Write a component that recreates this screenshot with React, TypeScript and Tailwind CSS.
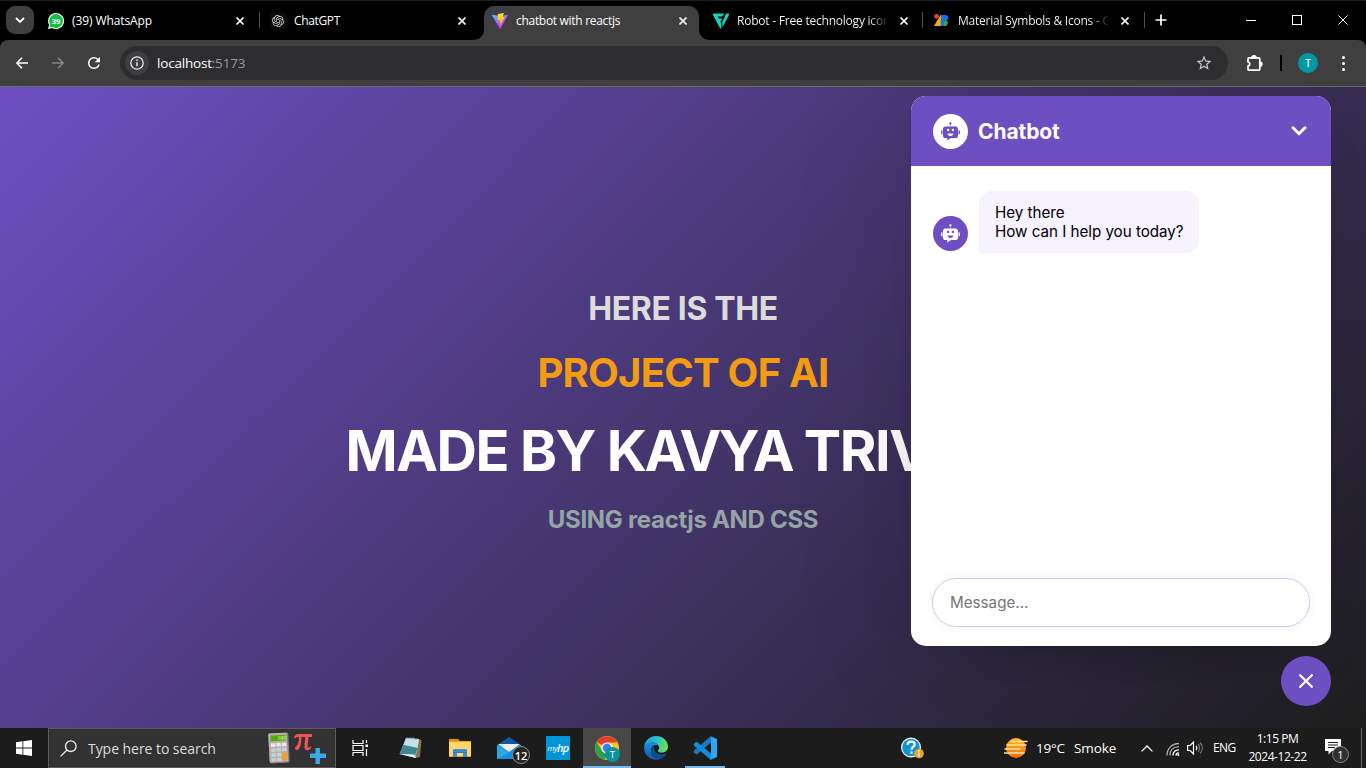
import React from "react";

const UI = "font-['Open_Sans','Noto_Sans',sans-serif]";

const ROBOT =
  "M738.3 287.6H285.7c-59 0-106.8 47.8-106.8 106.8v303.1c0 59 47.8 106.8 106.8 106.8h81.5v111.1c0 .7.8 1.1 1.4.7l166.9-110.6 41.8-.8h117.4l43.6-.4c59 0 106.8-47.8 106.8-106.8V394.5c0-59-47.8-106.9-106.8-106.9zM351.7 448.2c0-29.5 23.9-53.5 53.5-53.5s53.5 23.9 53.5 53.5-23.9 53.5-53.5 53.5-53.5-23.9-53.5-53.5zm157.9 267.1c-67.8 0-123.8-47.5-132.3-109h264.6c-8.6 61.5-64.5 109-132.3 109zm110-213.7c-29.5 0-53.5-23.9-53.5-53.5s23.9-53.5 53.5-53.5 53.5 23.9 53.5 53.5-23.9 53.5-53.5 53.5zM867.2 644.5V453.1h26.5c19.4 0 35.1 15.7 35.1 35.1v121.1c0 19.4-15.7 35.1-35.1 35.1h-26.5zM95.2 609.4V488.2c0-19.4 15.7-35.1 35.1-35.1h26.5v191.3h-26.5c-19.4 0-35.1-15.7-35.1-35.1zM561.5 149.6c0 23.4-15.6 43.3-36.9 49.7v44.9h-30v-44.9c-21.4-6.5-36.9-26.3-36.9-49.7 0-28.6 23.3-51.9 51.9-51.9s51.9 23.3 51.9 51.9z";

function Robot({ inverted }: { inverted?: boolean }) {
  return (
    <div
      className={
        inverted
          ? "flex size-[35px] shrink-0 items-center justify-center rounded-full bg-white text-[#6D4FC2]"
          : "flex size-[35px] shrink-0 items-center justify-center rounded-full bg-[#6D4FC2] text-white"
      }
    >
      <svg viewBox="0 0 1024 1024" className="size-[23px]" fill="currentColor">
        <path d={ROBOT} />
      </svg>
    </div>
  );
}

function WhatsAppIcon() {
  return (
    <svg viewBox="0 0 16 16" className="size-4 shrink-0">
      <path d="M8 0a8 8 0 1 1-3.8 15L0 16l1.1-4A8 8 0 0 1 8 0z" fill="#fff" />
      <path d="M8 1a7 7 0 1 1-3.6 13L1.4 14.6l.8-3A7 7 0 0 1 8 1z" fill="#12c143" />
      <text x="8" y="10.7" textAnchor="middle" fontSize="7.6" fontWeight="700" fontFamily="Open Sans" fill="#fff">39</text>
    </svg>
  );
}

function OpenAIIcon() {
  return (
    <svg viewBox="0 0 16 16" className="size-4 shrink-0">
      <rect width="16" height="16" rx="3" fill="#0b0b0b" />
      <g transform="translate(2 2) scale(.5)" fill="#d5d5d5">
        <path d="M22.28 9.82a5.98 5.98 0 0 0-.52-4.91 6.05 6.05 0 0 0-6.51-2.9A6.07 6.07 0 0 0 4.98 4.18a5.98 5.98 0 0 0-4 2.9 6.05 6.05 0 0 0 .74 7.1 5.98 5.98 0 0 0 .51 4.91 6.05 6.05 0 0 0 6.52 2.9A5.98 5.98 0 0 0 13.26 24a6.06 6.06 0 0 0 5.77-4.21 5.99 5.99 0 0 0 4-2.9 6.06 6.06 0 0 0-.75-7.07zm-9.02 12.61a4.48 4.48 0 0 1-2.88-1.04l.14-.08 4.78-2.76a.8.8 0 0 0 .39-.68v-6.74l2.02 1.17v5.62a4.5 4.5 0 0 1-4.45 4.51zM3.6 18.3a4.47 4.47 0 0 1-.53-3.01l.14.08 4.78 2.76a.77.77 0 0 0 .78 0l5.84-3.37v2.33l-4.87 2.84A4.5 4.5 0 0 1 3.6 18.3zM2.34 7.9A4.49 4.49 0 0 1 4.7 5.92v5.68a.77.77 0 0 0 .39.68l5.81 3.35-2.02 1.17-4.86-2.76A4.5 4.5 0 0 1 2.34 7.9zm16.6 3.86-5.84-3.4 2.02-1.16 4.86 2.81a4.5 4.5 0 0 1-.68 8.1v-5.68a.79.79 0 0 0-.36-.67zm2.01-3.03-4.92-2.81a.78.78 0 0 0-.78 0L9.41 9.23V6.9l4.9-2.83a4.5 4.5 0 0 1 6.64 4.66zM8.3 12.86l-2.02-1.16V6.07a4.5 4.5 0 0 1 7.38-3.45L8.74 5.38a.8.8 0 0 0-.4.68zm1.1-2.37L12 9l2.6 1.5v3L12 15l-2.6-1.5z" />
      </g>
    </svg>
  );
}

function ViteIcon() {
  return (
    <svg viewBox="0 0 256 257" className="size-4 shrink-0">
      <defs>
        <linearGradient id="va" x1="0" x2=".57" y1="0" y2=".78">
          <stop offset="0" stopColor="#41D1FF" />
          <stop offset="1" stopColor="#BD34FE" />
        </linearGradient>
        <linearGradient id="vb" x1=".43" x2=".5" y1="0" y2=".9">
          <stop offset="0" stopColor="#FFEA83" />
          <stop offset=".1" stopColor="#FFDD35" />
          <stop offset="1" stopColor="#FFA800" />
        </linearGradient>
      </defs>
      <path fill="url(#va)" d="M255.153 37.938 134.897 252.976c-2.483 4.44-8.862 4.466-11.382.048L.875 37.958c-2.746-4.814 1.371-10.646 6.827-9.67l120.385 21.517a6.537 6.537 0 0 0 2.322-.004l117.867-21.483c5.438-.991 9.574 4.796 6.877 9.62Z" />
      <path fill="url(#vb)" d="M185.432.063 96.44 17.501a3.268 3.268 0 0 0-2.634 3.014l-5.474 92.456a3.268 3.268 0 0 0 3.997 3.378l24.777-5.718c2.318-.535 4.413 1.507 3.936 3.838l-7.361 36.047c-.495 2.426 1.782 4.5 4.151 3.78l15.304-4.649c2.372-.72 4.652 1.36 4.15 3.788l-11.698 56.621c-.732 3.542 3.979 5.473 5.943 2.437l1.313-2.028 72.516-144.72c1.215-2.423-.88-5.186-3.54-4.672l-25.505 4.922c-2.396.462-4.435-1.77-3.759-4.114l16.646-57.705c.677-2.35-1.37-4.583-3.769-4.113Z" />
    </svg>
  );
}

function FlaticonIcon() {
  return (
    <svg viewBox="0 0 16 16" className="size-4 shrink-0" fill="#10d5c2">
      <path d="M.2.5H11L9.3 3.600H4.800l1 1.900h3.400L7.600 8.500h-.3l1.100 2.200-.1 4.900c-.6.300-1.100 0-1.400-.500L.300 2.400C-.100 1.500-.200 1 .200.500z" />
      <path d="M13.200.500h2.500c.500.600.300 1.200 0 1.900L9.300 14.500V9.200z" />
    </svg>
  );
}

function GoogleFontsIcon() {
  return (
    <svg viewBox="0 0 16 16" className="size-4 shrink-0">
      <path d="M0 13 6.500 2H8v11z" fill="#f9ab00" />
      <path d="M7 2h3v11H6.500z" fill="#1a73e8" />
      <circle cx="2.500" cy="3.300" r="2.400" fill="#ea4335" />
      <path d="M10 2h1.500a2.800 2.800 0 0 1 0 5.600H10z" fill="#1a73e8" />
      <path d="M10 7h1.700a3.200 3.200 0 0 1 0 6H10z" fill="#34a853" />
      <path d="M10 7h1.400a3.100 3.100 0 0 0-1.400 3z" fill="#0d652d" />
    </svg>
  );
}

function TabClose() {
  return (
    <svg viewBox="0 0 8 8" className="size-2 shrink-0" stroke="#f1f1f1" strokeWidth="1.7">
      <path d="M.5.5l7 7M7.500.500l-7 7" />
    </svg>
  );
}

function Tab({
  icon,
  title,
  titleClass,
  wide,
}: {
  icon: React.ReactNode;
  title: string;
  titleClass: string;
  wide?: boolean;
}) {
  return (
    <div className={wide ? "flex h-[39px] w-[196px] shrink-0 items-center" : "flex h-[39px] w-[195px] shrink-0 items-center"}>
      {icon}
      <div className="ml-2 flex-1 overflow-hidden whitespace-nowrap text-xs text-white">
        <span className={titleClass}>{title}</span>
      </div>
      <div className="ml-[13px]">
        <TabClose />
      </div>
    </div>
  );
}

function Separator() {
  return <div className="mt-[11px] h-4 w-px shrink-0 self-start bg-[#505050]" />;
}

function TabStrip() {
  return (
    <div className={`flex h-10 shrink-0 border-t border-[#202020] bg-black ${UI}`}>
      <div className="ml-[6px] mt-[5px] flex size-7 shrink-0 items-center justify-center rounded-[9px] bg-[#3f3f3f]">
        <svg viewBox="0 0 10 7" className="h-[7px] w-[10px]" fill="none" stroke="#fff" strokeWidth="1.8">
          <path d="M1 1l4 4 4-4" />
        </svg>
      </div>
      <div className="ml-[14px] flex w-[211px] shrink-0">
        <Tab wide icon={<WhatsAppIcon />} title="(39) WhatsApp" titleClass="tracking-[-0.1px]" />
      </div>
      <Separator />
      <div className="ml-[10px] flex w-[214px] shrink-0">
        <Tab wide icon={<OpenAIIcon />} title="ChatGPT" titleClass="tracking-[-0.35px]" />
      </div>
      <div className="relative mt-[5px] flex h-[34px] w-[215px] shrink-0 rounded-t-[10px] bg-[#3f3f3f] pl-2">
        <svg viewBox="0 0 10 10" className="absolute -left-[10px] bottom-0 size-[10px]" fill="#3f3f3f">
          <path d="M10 0v10H0A10 10 0 0 0 10 0z" />
        </svg>
        <svg viewBox="0 0 10 10" className="absolute -right-[10px] bottom-0 size-[10px]" fill="#3f3f3f">
          <path d="M0 0v10h10A10 10 0 0 1 0 0z" />
        </svg>
        <div className="-mt-[5px]">
          <Tab icon={<ViteIcon />} title="chatbot with reactjs" titleClass="tracking-[-0.3px]" />
        </div>
      </div>
      <div className="ml-[14px] flex w-[209px] shrink-0">
        <Tab
          icon={<FlaticonIcon />}
          title="Robot - Free technology icons"
          titleClass="block bg-linear-to-r from-white from-88% to-white/10 to-100% bg-clip-text tracking-[-0.22px] text-transparent"
        />
      </div>
      <Separator />
      <div className="ml-[11px] flex w-[210px] shrink-0">
        <Tab
          icon={<GoogleFontsIcon />}
          title="Material Symbols & Icons - Google"
          titleClass="block bg-linear-to-r from-white from-88% to-white/10 to-100% bg-clip-text tracking-[-0.23px] text-transparent"
        />
      </div>
      <Separator />
      <svg viewBox="0 0 12 12" className="ml-[10px] mt-[13px] size-3 shrink-0" stroke="#fff" strokeWidth="1.7">
        <path d="M6 .5v11M.5 6h11" />
      </svg>
      <div className="ml-auto mr-[18px] mt-[13px] flex h-[12px] items-center gap-9">
        <div className="h-px w-[10px] bg-white" />
        <div className="size-[10px] border border-white" />
        <svg viewBox="0 0 11 11" className="size-[10px]" stroke="#fff" strokeWidth="1.1">
          <path d="M.5.500l10 10M10.500.500l-10 10" />
        </svg>
      </div>
    </div>
  );
}

function Toolbar() {
  return (
    <div className="shrink-0 bg-black">
      <div className={`flex h-[47px] items-center rounded-t-[8px] border-b border-[#6b6b6b] bg-[#3f3f3f] ${UI}`}>
        <svg viewBox="0 0 12 12" className="ml-4 size-3" fill="none" stroke="#fff" strokeWidth="1.6">
          <path d="M12 6H1M6 .800.800 6 6 11.200" />
        </svg>
        <svg viewBox="0 0 12 12" className="ml-6 size-3" fill="none" stroke="#868686" strokeWidth="1.600">
          <path d="M0 6h11M6 .800 11.200 6 6 11.200" />
        </svg>
        <svg viewBox="0 0 24 24" className="ml-[21px] size-[18px]" fill="#fff">
          <path d="M17.650 6.350A7.960 7.960 0 0 0 12 4a8 8 0 1 0 7.730 10h-2.080A6 6 0 1 1 12 6c1.660 0 3.140.690 4.220 1.780L13 11h7V4z" />
        </svg>
        <div className="ml-[17px] flex h-[34px] w-[1108px] items-center rounded-full bg-[#2d2d30]">
          <div className="ml-[5px] flex size-6 items-center justify-center rounded-full bg-[#3e3e40]">
            <svg viewBox="0 0 14 14" className="size-[14px]" fill="none" stroke="#e8e8e8" strokeWidth="1.3">
              <circle cx="7" cy="7" r="6.200" />
              <path d="M7 6.200v4M7 3.600v1.400" strokeWidth="1.500" />
            </svg>
          </div>
          <div className="ml-2 text-[13.500px] leading-5 tracking-[-0.2px] text-white">
            localhost<span className="text-[#9a9a9d]">:5173</span>
          </div>
          <svg viewBox="0 0 24 24" className="ml-auto mr-[15px] size-[18px]" fill="#c7c7c7">
            <path d="m22 9.240-7.190-.620L12 2 9.190 8.630 2 9.240l5.460 4.730L5.820 21 12 17.270 18.180 21l-1.630-7.030zM12 15.400l-3.760 2.270 1-4.280-3.320-2.880 4.380-.380L12 6.100l1.710 4.040 4.380.380-3.320 2.880 1 4.280z" />
          </svg>
        </div>
        <svg viewBox="0 0 17 17" className="ml-[18px] size-[17px]" fill="none" stroke="#fff" strokeWidth="1.700">
          <path d="M3 2.900h9.800q1 0 1 1v10.300q0 1-1 1H3q-1 0-1-1v-3.100c2.400-.600 2.400-3.600 0-4.200V3.900q0-1 1-1z" strokeLinejoin="round" />
          <path d="M6 2.900a2 2 0 0 1 4 0zM13.800 7a2 2 0 0 1 0 4z" fill="#fff" />
        </svg>
        <div className="ml-[17px] h-4 w-[2px] bg-black" />
        <div className="ml-4 flex size-5 items-center justify-center rounded-full bg-[#0097a7] text-[10px] leading-none font-semibold text-white">T</div>
        <div className="ml-6 flex w-[3px] flex-col gap-[3px]">
          <div className="size-[3px] rounded-full bg-white" />
          <div className="size-[3px] rounded-full bg-white" />
          <div className="size-[3px] rounded-full bg-white" />
        </div>
      </div>
    </div>
  );
}

function Chat() {
  return (
    <div className="absolute right-[35px] top-[9px] flex h-[550px] w-[420px] flex-col overflow-hidden rounded-[15px] bg-white shadow-[0_32px_64px_-48px_rgba(0,0,0,0.5),0_0_128px_0_rgba(0,0,0,0.1)]">
      <div className="flex h-[70px] shrink-0 items-center bg-[#6D4FC2] px-[22px]">
        <Robot inverted />
        <h2 className="ml-[10px] pt-px text-[21px] font-bold tracking-[-0.1px] text-white">Chatbot</h2>
        <svg viewBox="0 0 16 10" className="ml-auto mr-[2px] h-[10px] w-4" fill="none" stroke="#fff" strokeWidth="2.900" strokeLinecap="round">
          <path d="M2 1.800l6 6 6-6" />
        </svg>
      </div>
      <div className="flex flex-1 items-start px-[22px] pt-[25px]">
        <div className="flex items-end">
          <div className="mb-[2px]">
            <Robot />
          </div>
          <div className="ml-[11px] h-[62px] w-[220px] rounded-[13px_13px_13px_3px] bg-[#F6F2FF] px-4 py-3 text-[15.200px] leading-[19px] tracking-[-0.03px] text-black">
            Hey there
            <br />
            How can I help you today?
          </div>
        </div>
      </div>
      <div className="px-[21px] pb-[19px]">
        <div className="flex h-[49px] items-center rounded-full border border-[#CCCCE5] px-[17px] pt-[2px] text-[15.200px] text-[#757575] shadow-[0_0_8px_rgba(0,0,0,0.06)]">
          Message...
        </div>
      </div>
    </div>
  );
}

function Page() {
  return (
    <div className="relative flex h-[641px] shrink-0 flex-col items-center overflow-hidden bg-[linear-gradient(135deg,#6D4FC2,#1e1e1e)] font-['Inter',sans-serif] font-bold whitespace-nowrap">
      <div className="mt-[202px] text-[32px] leading-10 tracking-[-0.35px] text-[#dcdcdc]">HERE IS THE</div>
      <div className="mt-[19px] text-[40px] leading-[50px] tracking-[-0.78px] text-[#f39c12]">PROJECT OF AI</div>
      <div className="mt-[18px] pr-[5px] text-[56px] leading-[70px] tracking-[-1.470px] text-white">
        MADE BY <span className="tracking-[-2.500px]">KAVYA</span> TRIVEDI
      </div>
      <div className="mt-[19px] text-[24px] leading-[30px] tracking-[-0.3px] text-[#95a5a6]">USING reactjs AND CSS</div>
      <div className="font-normal">
        <Chat />
      </div>
      <div className="absolute right-[35px] top-[569px] flex size-[50px] items-center justify-center rounded-full bg-[#6D4FC2]">
        <svg viewBox="0 0 14 14" className="size-[14px]" stroke="#fff" strokeWidth="2.300" strokeLinecap="round">
          <path d="M1.200 1.200l11.600 11.600M12.800 1.200 1.200 12.800" />
        </svg>
      </div>
    </div>
  );
}

function NotepadIcon() {
  return (
    <svg viewBox="0 0 24 24" className="size-6">
      <path d="M19 3l3.500 1-1.500 17-4 1z" fill="#8a7442" />
      <path d="M7 2l13 1-3 19L.500 18z" fill="#77b5c4" />
      <path d="M7 2l13 1-1.500 9L4.500 9z" fill="#c5e0e6" />
      <path d="M4.500 9l14 3-2.500 7L.500 18z" fill="#3f8793" />
      <path d="M.500 18l14.500.500 2 3.500z" fill="#e7f5f8" />
      <path d="M8 1v2M11 1v2M14 1v2M17 2v2" stroke="#8a8a8a" strokeWidth="1" />
    </svg>
  );
}

function FolderIcon() {
  return (
    <svg viewBox="0 0 22 20" className="h-5 w-[22px]">
      <path d="M0 1h9l2 2h11v16H0z" fill="#e8a317" />
      <path d="M0 4h22v14H0z" fill="#ffd668" />
      <path d="M0 1h9l1 2H0z" fill="#d99400" />
      <path d="M4 12q0-1 1-1h12q1 0 1 1v7h-4v-4H8v4H4z" fill="#3a8dd8" />
      <path d="M4 14h14v1H4z" fill="#2f78bd" />
    </svg>
  );
}

function MailIcon() {
  return (
    <div className="relative size-6">
      <svg viewBox="0 0 24 24" className="size-6">
        <path d="M0 9 12 1l12 8z" fill="#0c59a4" />
        <path d="M0 9h24v14H0z" fill="#1490df" />
        <path d="M1 8h22L12 16z" fill="#f0f0f0" />
        <path d="M0 9l12 8L0 23z" fill="#28a8ea" />
      </svg>
      <div className="absolute left-[15px] top-[10px] flex size-[18px] items-center justify-center rounded-full border border-[#8a8a8a] bg-[#242424] text-[11px] leading-none font-semibold text-white">
        12
      </div>
    </div>
  );
}

function ChromeIcon() {
  return (
    <div className="relative size-6">
      <svg viewBox="0 0 24 24" className="size-6">
        <circle cx="12" cy="12" r="12" fill="#f7c325" />
        <path d="M12 12 1.600 6A12 12 0 0 1 22.400 6.500H12z" fill="#e33b2e" />
        <path d="M1.600 6 7.200 15 12 17.500 10 23.800A12 12 0 0 1 1.600 6z" fill="#2ba24c" />
        <circle cx="12" cy="12" r="5.600" fill="#fff" />
        <circle cx="12" cy="12" r="4.400" fill="#3f7de8" />
      </svg>
      <div className="absolute left-[10px] top-[11px] flex size-[15px] items-center justify-center rounded-full bg-[#0b929a] text-[9px] leading-none text-white">T</div>
    </div>
  );
}

function EdgeIcon() {
  return (
    <svg viewBox="0 0 24 24" className="size-6">
      <defs>
        <linearGradient id="ea" x1="0" x2="1" y1=".3" y2=".5">
          <stop offset="0" stopColor="#1f9be6" />
          <stop offset=".5" stopColor="#2ec0c9" />
          <stop offset="1" stopColor="#6ee04f" />
        </linearGradient>
        <linearGradient id="eb" x1="0" x2="0" y1="0" y2="1">
          <stop offset="0" stopColor="#1b8fe0" />
          <stop offset="1" stopColor="#1259a5" />
        </linearGradient>
      </defs>
      <path d="M.100 11C.800 4.500 6 0 12 0c7 0 12 5 12 10.500 0 4-3 6-6.200 6-2.800 0-4-1-4-1.800 0-.500 1.300-1.200 1.300-3.200C15.100 8.500 12 6.400 8.500 6.400 4 6.400 1 9 .100 11z" fill="url(#ea)" />
      <path d="M.100 11C1 8.500 4.500 6.400 8.500 6.400c3.500 0 6.600 2 6.600 5 0-1.200-1.300-2.400-3-2.400-3.500 0-5.100 3-5.100 5.500 0 5 4 8.500 8.500 8.800A12 12 0 0 1 .100 11z" fill="url(#eb)" />
      <path d="M10 10c-2 1-3 3-3 5 0 4.500 3.500 8.500 8.500 8.300 3-.800 5.500-2.800 6.900-5.300.200-.500-.200-.800-.700-.500-5.500 2.500-12.500-.500-11.700-7.500z" fill="#114a8b" />
    </svg>
  );
}

function VSCodeIcon() {
  return (
    <svg viewBox="0 0 24 24" className="size-6">
      <path d="M18 0v6.500L4 18.200 2.800 18 .800 16.200v-1.500z" fill="#0f7dc9" />
      <path d="M.800 8.100 2.800 6l1.200-.100L18 17.500V24L.800 9.500z" fill="#138bd8" />
      <path d="M17 0 24 3v18l-7 3c-.500 0 1-.200 1-1.500v-21C18 .200 17 0 17 0z" fill="#2ba6f2" />
    </svg>
  );
}

function TaskButton({ children, state }: { children: React.ReactNode; state?: "active" | "open" }) {
  return (
    <div className="flex h-10 w-[49px] shrink-0">
      <div
        className={
          state === "active"
            ? "relative flex w-12 items-center justify-center bg-[#484848]"
            : "relative flex w-12 items-center justify-center"
        }
      >
        {children}
        {state === "active" && <div className="absolute inset-x-0 bottom-0 h-[2px] bg-[#76b9ed]" />}
        {state === "open" && <div className="absolute inset-x-1 bottom-0 h-[2px] bg-[#76b9ed]" />}
      </div>
    </div>
  );
}

function Taskbar() {
  return (
    <div className={`flex h-10 shrink-0 items-center bg-[#1c1c1c] text-white ${UI}`}>
      <svg viewBox="0 0 16 16" className="ml-4 size-4 shrink-0" fill="#fff">
        <path d="M0 2.200 6.500 1.300V7.600H0zM7.300 1.200 16 0v7.600H7.300zM0 8.400h6.500v6.300L0 13.800zM7.300 8.400H16V16l-8.700-1.200z" />
      </svg>
      <div className="ml-4 flex h-10 w-[288px] shrink-0 items-center border border-[#5c5c5c] bg-[#323232]">
        <svg viewBox="0 0 17 17" className="ml-[11px] size-[17px]" fill="none" stroke="#f0f0f0" strokeWidth="1.300">
          <circle cx="10.800" cy="6.200" r="5.300" />
          <path d="M7 10 .600 16.400" />
        </svg>
        <div className="ml-[11px] pt-px text-sm tracking-[-0.05px] text-[#dcdcdc]">Type here to search</div>
        <svg viewBox="0 0 60 34" className="ml-auto mr-[8px] h-[34px] w-[60px]">
          <g transform="rotate(-3 12 17)">
            <rect x="2" y="2" width="20" height="30" rx="1.500" fill="#8b7e86" />
            <rect x="2" y="2" width="18.500" height="29" rx="1" fill="#b9aeb3" />
            <rect x="4" y="4" width="15.500" height="6" fill="#55a80c" />
            <path d="M12.500 5v4M14.500 5.500h1.500v3h-1.500zM17.500 5.500h1.200v3h-1.200z" stroke="#bdf06d" strokeWidth=".8" fill="none" />
            <g fill="#eee8e8">
              <rect x="4" y="12" width="4.500" height="3.500" rx=".5" />
              <rect x="9.500" y="12" width="4.500" height="3.500" rx=".5" />
              <rect x="15" y="12" width="4.500" height="3.500" rx=".5" />
            </g>
            <g fill="#c5d2cf">
              <rect x="4" y="17" width="4.500" height="3.500" rx=".5" />
              <rect x="9.500" y="17" width="4.500" height="3.500" rx=".5" />
              <rect x="15" y="17" width="4.500" height="3.500" rx=".5" />
              <rect x="4" y="22" width="4.500" height="3.500" rx=".5" />
              <rect x="9.500" y="22" width="4.500" height="3.500" rx=".5" />
              <rect x="4" y="27" width="4.500" height="3" rx=".5" />
              <rect x="9.500" y="27" width="4.500" height="3" rx=".5" />
            </g>
            <rect x="15" y="22" width="4.500" height="8" rx=".5" fill="#f59a22" />
          </g>
          <path d="M27 7c.800-3 2-4 4-4h14v3h-3.500l-.800 9c-.100 2 2 2 2.800.300h.800c-.500 3-2 4-3.800 4-2.500 0-3.300-1.500-3-4.500l.700-8.800h-3.800c0 6-1 13-4.500 13-2.500 0-2.500-2.500-.500-4C31 14 31.800 11 32 6c-2 0-3 .200-4 1.500z" fill="#ed5257" />
          <path d="M48.500 17h4.500v5.500h6V27h-6v6h-4.500v-6H43v-4.500h5.500z" fill="#39a8e4" />
        </svg>
      </div>
      <div className="flex w-[51px] shrink-0 justify-center pr-[3px]">
        <svg viewBox="0 0 17 16" className="h-4 w-[17px]" fill="none" stroke="#fff" strokeWidth="1.200">
          <path d="M1 0v3.500h10V0M1 16v-3.500h10V16M1 5.500h10v5H1zM14.500 0v3M14.500 9v7" />
          <rect x="13.500" y="4.500" width="2.500" height="2.500" fill="#fff" stroke="none" />
        </svg>
      </div>
      <TaskButton><NotepadIcon /></TaskButton>
      <TaskButton><FolderIcon /></TaskButton>
      <TaskButton><MailIcon /></TaskButton>
      <TaskButton>
        <div className="flex size-6 items-center justify-center bg-[#0096d6] text-white italic">
          <span className="text-[8px] tracking-[-0.6px]">my</span>
          <span className="text-[11px] font-semibold tracking-[-0.8px]">hp</span>
        </div>
      </TaskButton>
      <TaskButton state="active"><ChromeIcon /></TaskButton>
      <TaskButton><EdgeIcon /></TaskButton>
      <TaskButton state="open"><VSCodeIcon /></TaskButton>
      <svg viewBox="0 0 24 24" className="ml-[170px] size-6 shrink-0">
        <path d="M11 1.500A10 10 0 1 1 11 21.500 10 10 0 0 1 11 1.500z" fill="#fff" />
        <circle cx="11" cy="11.500" r="8.800" fill="#0e93d2" />
        <path d="M7.500 9c0-4.500 7.500-4.500 7.200-.500-.200 2.500-3.200 2.500-3.200 5.300M11.500 15.500v2.200" fill="none" stroke="#fff" strokeWidth="2.300" />
        <circle cx="19" cy="17.500" r="4.800" fill="#efa02b" />
        <path d="M19 16.500v4M19 14.200v1.500" stroke="#fff" strokeWidth="1.500" />
      </svg>
      <svg viewBox="0 0 24 22" className="ml-[80px] h-[22px] w-6 shrink-0">
        <defs>
          <linearGradient id="sun" x1="0" x2="0" y1="0" y2="1">
            <stop offset="0" stopColor="#fbbd18" />
            <stop offset="1" stopColor="#ef6c11" />
          </linearGradient>
        </defs>
        <circle cx="12" cy="11" r="10" fill="url(#sun)" />
        <path d="M8 4.500h15M3 8h19M1 12h15M3 16h17M0 16h2" stroke="#ffe0a5" strokeWidth="1.500" strokeLinecap="round" />
      </svg>
      <div className="ml-[8px] w-[38px] shrink-0 text-[13.500px] tracking-[-0.2px]">19°C</div>
      <div className="w-[67px] shrink-0 text-[13.500px] tracking-[-0.1px]">Smoke</div>
      <svg viewBox="0 0 12 7" className="h-[7px] w-3 shrink-0" fill="none" stroke="#fff" strokeWidth="1.300">
        <path d="M.600 6.400 6 1l5.400 5.400" />
      </svg>
      <svg viewBox="0 0 14 14" className="ml-[13px] mt-[2px] size-[14px] shrink-0" fill="none" strokeWidth="1.300">
        <path d="M1 13.500C1 6.500 6 1.500 13 1.500M4 13.500C4 8 7.500 4.700 13 4.700" stroke="#b0b0b0" />
        <path d="M7 13.500c0-3.500 2.500-5.700 6-5.700M10 13.500c0-1.700 1.200-2.600 3-2.600" stroke="#fff" />
        <circle cx="12.300" cy="13" r="1" fill="#fff" />
      </svg>
      <svg viewBox="0 0 16 14" className="ml-[7px] h-[14px] w-4 shrink-0" fill="none" stroke="#fff" strokeWidth="1.200">
        <path d="M.600 4.500h2.500L6.500 1v12L3.100 9.500H.600zM9 5c1 1.200 1 2.800 0 4" />
        <path d="M11 3c2 2.300 2 5.700 0 8M13 1.500c3 3.300 3 7.700 0 11" stroke="#777" />
      </svg>
      <div className="ml-[10px] w-6 shrink-0 text-xs tracking-[-0.6px]">ENG</div>
      <div className="ml-[9px] flex w-[63px] shrink-0 flex-col items-center whitespace-nowrap text-xs leading-[18px] tracking-[-0.45px]">
        <span>1:15 PM</span>
        <span>2024-12-22</span>
      </div>
      <div className="relative ml-4 h-[26px] w-6 shrink-0">
        <svg viewBox="0 0 16 16" className="mt-[4px] size-4">
          <path d="M0 0h16v12H7l-3.500 3.500V12H0z" fill="#fff" />
          <path d="M3 3.500h10M3 6h10M3 8.500h7" stroke="#1c1c1c" strokeWidth="1" />
        </svg>
        <div className="absolute left-[7px] top-[11px] flex size-[17px] items-center justify-center rounded-full border border-[#8a8a8a] bg-[#303030] text-[11px] leading-none">
          1
        </div>
      </div>
      <div className="ml-auto mr-1 h-10 w-px bg-[#666]" />
    </div>
  );
}

export default function App() {
  return (
    <div className="flex h-[768px] w-[1366px] flex-col overflow-hidden">
      <TabStrip />
      <Toolbar />
      <Page />
      <Taskbar />
    </div>
  );
}
